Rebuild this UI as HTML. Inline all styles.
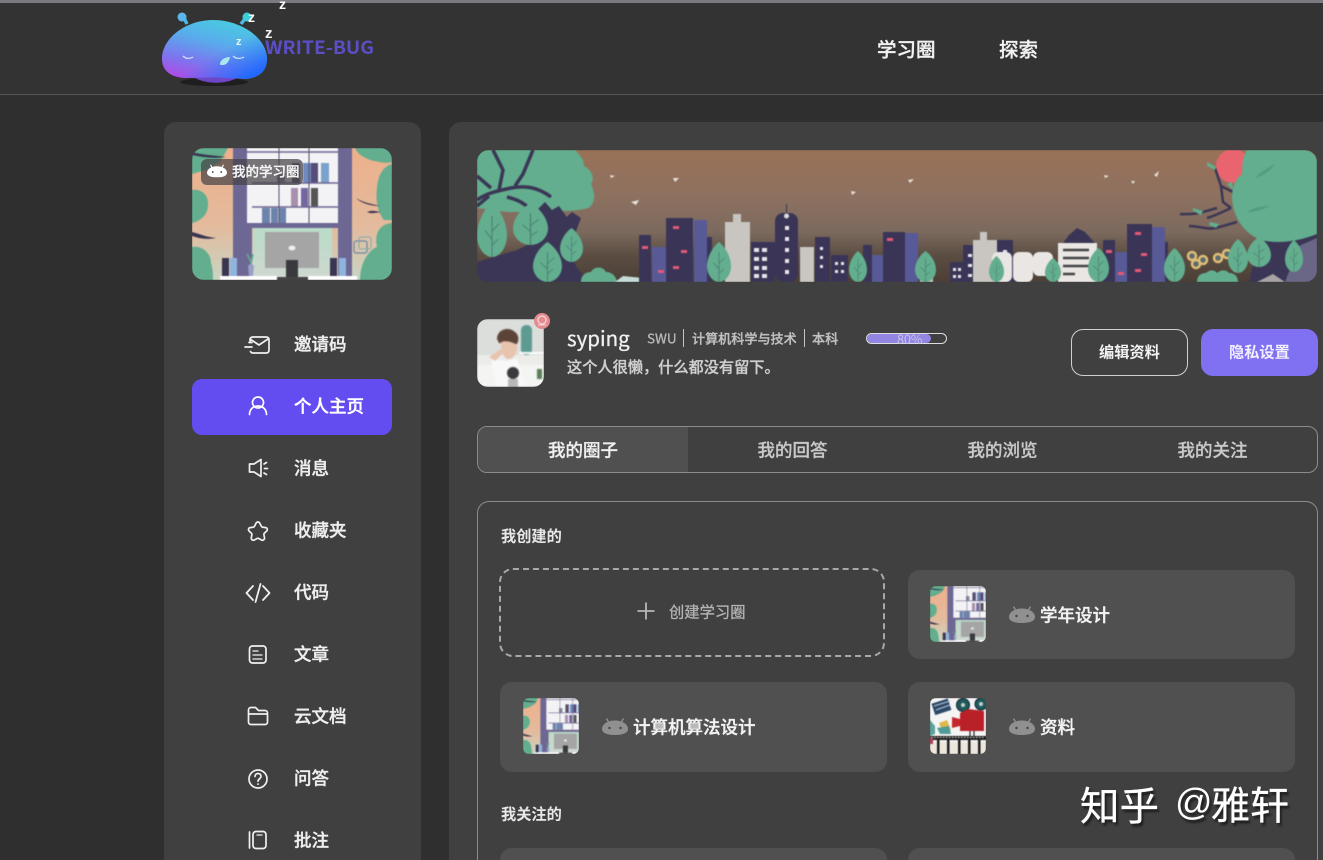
<!DOCTYPE html>
<html lang="zh">
<head>
<meta charset="utf-8">
<title>WRITE-BUG</title>
<style>
html,body{margin:0;padding:0;width:1323px;height:860px;overflow:hidden;background:#2f2f2f}
body{position:relative;font-family:"Noto Sans CJK SC","Liberation Sans",sans-serif;color:#eee}
.a{position:absolute}
.t{position:absolute;white-space:nowrap;line-height:1;transform:translateY(-50%)}
.s{-webkit-text-stroke:.3px currentColor}
.m{font-size:17.5px;font-weight:500;left:294px;color:#eee;-webkit-text-stroke:.35px currentColor;margin-top:-1px}
.card{position:absolute;width:387px;height:90px;background:#505050;border-radius:12px}
.thumb{position:absolute;width:56px;height:56px;border-radius:6px;overflow:hidden}
.thumb svg{filter:blur(.4px)}
.ct{font-size:17.5px;font-weight:500;color:#f2f2f2;-webkit-text-stroke:.35px currentColor}
.tab{font-size:17.5px;font-weight:500;color:#c8c8c8;-webkit-text-stroke:.25px currentColor}
svg{display:block}
</style>
</head>
<body>
<svg width="0" height="0" style="position:absolute">
<defs>
<symbol id="robot" viewBox="0 0 26 18">
<path d="M6.500 5L4.500 1.500M19.500 5l2-3.500" stroke="currentColor" stroke-width="1.400" fill="none"/>
<path d="M0 12C0 7 6 3.500 13 3.500S26 7 26 12c0 4-5 6-13 6S0 16 0 12z" fill="currentColor"/>
<circle cx="7.500" cy="11" r="1.200" fill="#444"/><circle cx="18.500" cy="11" r="1.200" fill="#444"/>
</symbol>
<linearGradient id="hsk" x1="0" y1="0" x2="0" y2="1"><stop offset="0" stop-color="#eeb08c"/><stop offset=".6" stop-color="#e3bb9d"/><stop offset="1" stop-color="#c9d5c4"/></linearGradient>
<linearGradient id="hgr" x1="0" y1="0" x2="0" y2="1"><stop offset="0" stop-color="#b9dcc8"/><stop offset="1" stop-color="#cfd8d0"/></linearGradient>
<symbol id="hero" viewBox="0 0 200 132" preserveAspectRatio="xMinYMid slice">
<rect width="200" height="132" fill="url(#hsk)"/>
<path d="M0 0H36L28 14 14 22 0 26z" fill="#62ae8e"/>
<path d="M0 42c10-2 17 6 16 16-1 10-8 15-16 17z" fill="#62ae8e"/>
<path d="M0 99c10-2 19 6 19 16 2 6 2 12 2 17H0z" fill="#62ae8e"/>
<path d="M0 84c8 2 14 5 24 6-10 2-18 0-24-2z" fill="#3a3550"/>
<path d="M0 4c10 3 20 3 34 5-12 2-24 0-34-2z" fill="#3a3550"/>
<path d="M163 0h37v14c-6 2-12 0-18-1-8-2-16-6-19-13z" fill="#62ae8e"/>
<path d="M200 16c-8 2-14 10-15 24-2 14 2 26 7 32h8z" fill="#62ae8e"/>
<path d="M200 75c-12 1-18 10-15 24-10 4-17 18-17 33h32z" fill="#62ae8e"/>
<path d="M164 50c8 5 16 6 24 8-8 0-18-2-24-8zM175 64c5-2 8-1 14 0-6 1-10 2-14 0z" fill="#3a3550"/>
<rect x="162" y="93" width="13" height="12" rx="2" fill="none" stroke="#6d88a8" stroke-width="1.200"/><rect x="167" y="89" width="12" height="12" rx="2" fill="none" stroke="#8aa"/>
<rect x="41" y="0" width="19" height="132" fill="#6d6794"/><rect x="146" y="0" width="14" height="132" fill="#6d6794"/>
<rect x="55" y="0" width="91" height="75" fill="#f3f2f5"/>
<rect x="70" y="60" width="8" height="15" fill="#6c83ac"/><rect x="79" y="60" width="7" height="15" fill="#6c83ac"/><rect x="87" y="60" width="7" height="15" fill="#6c83ac"/>
<rect x="99" y="40" width="7" height="19" fill="#a890ad"/><rect x="109" y="40" width="7" height="19" fill="#74679f"/><rect x="119" y="40" width="7" height="19" fill="#555"/>
<rect x="85" y="24" width="8" height="11" fill="#8a8aa0"/><rect x="100" y="15" width="8" height="20" fill="#55506e"/><rect x="111" y="15" width="8" height="20" fill="#6e8ac0"/><rect x="119" y="15" width="7" height="20" fill="#584c78"/><rect x="129" y="15" width="8" height="20" fill="#7ba2cc"/>
<path d="M55 4H146M60 35H146M60 59H146" stroke="#6d6794" stroke-width="1.500"/>
<path d="M87 0V75M117 0V75" stroke="#55506e" stroke-width="1"/>
<rect x="55" y="75" width="91" height="5" fill="#6d6794"/>
<rect x="61" y="80" width="79" height="50" fill="url(#hgr)"/>
<rect x="73" y="84" width="54" height="36" fill="#a5a5a5"/>
<rect x="94" y="112" width="12" height="17" fill="#3a3a3e"/><rect x="85" y="129" width="31" height="3" fill="#444"/>
<ellipse cx="100" cy="100" rx="3.500" ry="2.500" fill="#eee"/>
<rect x="30" y="110" width="7" height="19" fill="#3a3550"/><rect x="38" y="110" width="7" height="19" fill="#8fb4dd"/>
<rect x="138" y="110" width="7" height="19" fill="#3a3550"/><rect x="147" y="110" width="7" height="19" fill="#8fb4dd"/>
<path d="M57 128l-1-10 3-3 3 3-1 10z" fill="#98a0c8"/><path d="M59 116l2-10M59 114l-4-8" stroke="#62ae8e" stroke-width="1.500"/>
<rect x="28" y="128" width="57" height="4" fill="#fff"/><rect x="116" y="128" width="49" height="4" fill="#fff"/>
</symbol>
<symbol id="leaf" viewBox="0 0 30 56" preserveAspectRatio="none">
<path d="M15 0C24 8 30 22 30 34c0 12-7 22-15 22S0 46 0 34C0 22 6 8 15 0z" fill="#62ae8e"/>
<path d="M15 14V56M15 30l7-8M15 38l-7-9M15 44l6-6" stroke="#4b7f72" stroke-width="1" fill="none"/>
</symbol>
<linearGradient id="sky" x1="0" y1="0" x2="0" y2="1"><stop offset="0" stop-color="#9a7158"/><stop offset=".35" stop-color="#8d7160"/><stop offset=".62" stop-color="#7c6a5e"/><stop offset=".8" stop-color="#5b4d42"/><stop offset="1" stop-color="#4b3f36"/></linearGradient>
<linearGradient id="blob" x1=".2" y1="1" x2=".65" y2="0"><stop offset="0" stop-color="#b04ae6"/><stop offset=".3" stop-color="#7a78ee"/><stop offset=".62" stop-color="#5aaaec"/><stop offset="1" stop-color="#48cce0"/></linearGradient>
<linearGradient id="blob2" x1="0" y1="0" x2="1" y2="1"><stop offset=".55" stop-color="#2f74f6" stop-opacity="0"/><stop offset=".9" stop-color="#1f68ff"/></linearGradient>
</defs>
</svg>

<!-- header -->
<div class="a" style="left:0;top:0;width:1323px;height:94px;background:#333;border-bottom:1px solid #565656"></div>
<div class="a" style="left:0;top:0;width:1323px;height:3px;background:#7a7a80"></div>
<svg class="a" style="left:150px;top:0;filter:blur(.3px)" width="240" height="94" viewBox="150 0 240 94">
<ellipse cx="214" cy="82" rx="34" ry="4" fill="#1e1e1e"/>
<path d="M192 76c12 9 36 9 48 0z" fill="#6d47c8"/>
<path d="M187 24l-4-8M241 24l6-8" stroke="#4cb8e8" stroke-width="3.500"/>
<circle cx="182" cy="17" r="4.500" fill="#5cb6ec"/><circle cx="247" cy="17" r="4.500" fill="#3bcfd8"/>
<path d="M162 59C162 38 186 20 213 20c28 0 54 18 54 39 0 12-8 19-22 20-8-.5-20-1.500-33-1.500-12 0-22 .5-28 .5-13-1-22-7-22-19z" fill="url(#blob)"/>
<path d="M162 59C162 38 186 20 213 20c28 0 54 18 54 39 0 12-8 19-22 20-8-.5-20-1.500-33-1.500-12 0-22 .5-28 .5-13-1-22-7-22-19z" fill="url(#blob2)"/>
<path d="M183 56c3 3 7 3 10 1M233 56c3 3 8 3 11 1" stroke="#cfe0f8" stroke-width="1.300" fill="none"/>
<path d="M220 64c0-4 5-7 10-7-1 5-4 8-7 8-2 0-3 0-3-1z" fill="#a8e8ee"/>
<text x="236" y="45" font-family="Liberation Sans" font-weight="700" font-size="11" fill="#e8f4f8">z</text>
<text x="248" y="22" font-family="Liberation Sans" font-weight="700" font-size="14" fill="#fff">z</text>
<text x="265" y="38" font-family="Liberation Sans" font-weight="700" font-size="15" fill="#eee">z</text>
<text x="279" y="9" font-family="Liberation Sans" font-weight="700" font-size="14" fill="#fff">z</text>
<text x="265" y="54" font-family="Noto Sans CJK SC,Liberation Sans,sans-serif" font-weight="700" font-size="18" textLength="109" lengthAdjust="spacingAndGlyphs" fill="#5b4fc6">WRITE-BUG</text>
</svg>
<div class="t s" style="left:877px;top:47.500px;font-size:19.500px;font-weight:500;color:#f2f2f2">学习圈</div>
<div class="t s" style="left:999px;top:47.500px;font-size:19.500px;font-weight:500;color:#f2f2f2">探索</div>

<!-- sidebar -->
<div class="a" style="left:164px;top:122px;width:257px;height:738px;background:#404040;border-radius:12px 12px 0 0"></div>
<div class="a" style="left:192px;top:148px;width:200px;height:132px;border-radius:12px;overflow:hidden"><svg style="filter:blur(.5px)" width="200" height="132" viewBox="0 0 200 132"><use href="#hero" width="200" height="132"/></svg></div>
<div class="a" style="left:201px;top:159px;width:102px;height:26px;background:rgba(70,66,70,.72);border-radius:6px"></div>
<svg class="a" style="left:207px;top:163px;color:#fff" width="20" height="15" viewBox="0 0 26 18"><use href="#robot" width="26" height="18"/></svg>
<div class="t s" style="left:232px;top:171px;font-size:13.500px;font-weight:500;color:#f4f4f4">我的学习圈</div>

<div class="a" style="left:192px;top:379px;width:200px;height:56px;background:#634cf0;border-radius:10px"></div>
<div class="t m" style="top:344.500px">邀请码</div>
<div class="t m" style="top:406.500px;color:#fff">个人主页</div>
<div class="t m" style="top:468.500px">消息</div>
<div class="t m" style="top:530.500px">收藏夹</div>
<div class="t m" style="top:592.500px">代码</div>
<div class="t m" style="top:654.500px">文章</div>
<div class="t m" style="top:716.500px">云文档</div>
<div class="t m" style="top:778.500px">问答</div>
<div class="t m" style="top:840.500px">批注</div>

<!-- main panel -->
<div class="a" style="left:449px;top:122px;width:874px;height:738px;background:#404040;border-radius:12px 0 0 0"></div>

<!-- banner -->
<div class="a" style="left:477px;top:150px;width:840px;height:132px;border-radius:12px;overflow:hidden">
<svg style="filter:blur(.5px)" width="840" height="132" viewBox="0 0 840 132">
<rect width="840" height="132" fill="url(#sky)"/>
<circle cx="756" cy="16" r="17" fill="#e9646f"/>
<!-- left big tree -->
<path d="M0 0H98c6 6 9 10 9 16 8 4 11 12 7 18 5 10 4 20-3 24-14 4-24 2-32 4H30L0 58z" fill="#62ae8e"/>
<path d="M56 0L46 24 38 36M16 0L26 20 22 40M0 26L14 38M0 50C10 43 20 41 34 38 50 35 62 38 74 47M30 47c8 2 14 4 22 11M12 46L0 56" stroke="#3b3656" stroke-width="3.500" fill="none"/>
<path d="M0 132V112L40 100 70 85 95 62 104 68 92 100 100 118 112 132z" fill="#3b3656"/>
<path d="M60 60L68 52 75 60 82 56 92 70 86 92 70 92z" fill="#3b3656"/>
<use href="#leaf" x="0" y="52" width="30" height="55"/>
<use href="#leaf" x="36" y="53" width="35" height="42"/>
<use href="#leaf" x="56" y="92" width="29" height="40"/>
<use href="#leaf" x="83" y="78" width="23" height="34"/>
<path d="M104 132c0-8 6-10 10-10 3-6 12-6 15 0 6 0 10 4 11 10z" fill="#62ae8e"/>
<path d="M138 132l8-6 20 2-4 4z" fill="#c7dcd8"/>
<!-- skyline left -->
<g fill="#3a3556">
<rect x="162" y="85" width="12" height="47"/><rect x="189" y="68" width="27" height="64"/><rect x="225" y="87" width="10" height="45"/>
<rect x="274" y="92" width="24" height="40"/><rect x="298" y="63" width="23" height="69" rx="8"/><rect x="338" y="87" width="15" height="45"/>
<rect x="354" y="105" width="17" height="27"/><rect x="386" y="95" width="9" height="37"/><rect x="406" y="82" width="22" height="50"/>
<rect x="473" y="112" width="13" height="20"/><rect x="486" y="95" width="14" height="37"/><rect x="520" y="90" width="16" height="42"/>
<rect x="536" y="107" width="15" height="25"/><rect x="626" y="90" width="12" height="42"/><rect x="650" y="74" width="25" height="58"/><rect x="685" y="92" width="6" height="40"/>
</g>
<g fill="#575a96">
<rect x="175" y="97" width="14" height="35"/><rect x="217" y="70" width="13" height="62"/><rect x="395" y="105" width="11" height="27"/>
<rect x="428" y="83" width="13" height="49"/><rect x="638" y="102" width="12" height="30"/><rect x="675" y="77" width="13" height="55"/>
</g>
<g fill="#c9c6c2">
<path d="M248 72h8v-8h8v8h9v60h-25z"/><rect x="323" y="97" width="14" height="35"/><path d="M496 90h7v-8h7v8h10v42h-24z"/>
<rect x="443" y="112" width="13" height="20"/>
</g>
<rect x="309" y="54" width="1" height="9" fill="#3a3556"/><circle cx="309.500" cy="66" r="2.500" fill="#ddd"/>
<g fill="#e9e6e4">
<rect x="515" y="102" width="20" height="30" rx="6"/><rect x="536" y="102" width="20" height="30" rx="6"/><rect x="556" y="102" width="20" height="24" rx="6"/>
<rect x="581" y="93" width="39" height="39"/>
</g>
<path d="M586 93l6-8 8-7 8 4 10 11z" fill="#3a3556"/>
<path d="M586 100h26M586 108h26M586 116h26M586 124h12" stroke="#444" stroke-width="2.500"/>
<g fill="#e8e5ea">
<rect x="277" y="98" width="5" height="4"/><rect x="285" y="98" width="5" height="4"/><rect x="277" y="107" width="5" height="4"/><rect x="285" y="107" width="5" height="4"/><rect x="277" y="116" width="5" height="4"/><rect x="285" y="116" width="5" height="4"/><rect x="277" y="124" width="5" height="4"/><rect x="285" y="124" width="5" height="4"/>
<rect x="308" y="76" width="4" height="4"/><rect x="308" y="87" width="4" height="4"/><rect x="308" y="98" width="4" height="4"/><rect x="308" y="109" width="4" height="4"/><rect x="308" y="120" width="4" height="4"/>
<rect x="343" y="97" width="3" height="3"/><rect x="343" y="106" width="3" height="3"/><rect x="343" y="115" width="3" height="3"/><rect x="358" y="112" width="3" height="3"/><rect x="364" y="112" width="3" height="3"/><rect x="358" y="120" width="3" height="3"/><rect x="364" y="120" width="3" height="3"/>
<rect x="476" y="118" width="3" height="3"/><rect x="481" y="118" width="3" height="3"/><rect x="476" y="125" width="3" height="3"/><rect x="481" y="125" width="3" height="3"/><rect x="491" y="104" width="4" height="3"/><rect x="491" y="114" width="4" height="3"/><rect x="491" y="124" width="4" height="3"/><rect x="526" y="100" width="4" height="3"/><rect x="526" y="110" width="4" height="3"/><rect x="526" y="120" width="4" height="3"/><rect x="540" y="114" width="3" height="3"/><rect x="545" y="114" width="3" height="3"/><rect x="540" y="123" width="3" height="3"/><rect x="545" y="123" width="3" height="3"/>
</g>
<g fill="#e25a78">
<rect x="196" y="76" width="6" height="3"/><rect x="165" y="96" width="6" height="3"/><rect x="204" y="100" width="6" height="3"/><rect x="196" y="116" width="6" height="3"/><rect x="181" y="120" width="6" height="3"/><rect x="410" y="88" width="6" height="3"/><rect x="658" y="82" width="6" height="3"/><rect x="664" y="103" width="6" height="3"/><rect x="658" y="119" width="6" height="3"/><rect x="629" y="100" width="6" height="3"/><rect x="641" y="122" width="6" height="3"/>
</g>
<use href="#leaf" x="230" y="92" width="24" height="40"/>
<use href="#leaf" x="372" y="101" width="18" height="31"/>
<use href="#leaf" x="438" y="101" width="21" height="31"/>
<use href="#leaf" x="512" y="106" width="15" height="26"/>
<use href="#leaf" x="568" y="108" width="16" height="24"/>
<use href="#leaf" x="611" y="98" width="21" height="34"/>
<use href="#leaf" x="687" y="98" width="21" height="34"/>
<!-- sunflowers -->
<g fill="#5d6a70" stroke="#e0bd74" stroke-width="2.500">
<circle cx="715" cy="106" r="4"/><circle cx="726" cy="110" r="4"/><circle cx="719" cy="114" r="4"/><circle cx="741" cy="108" r="4"/><circle cx="750" cy="104" r="4"/>
</g>
<path d="M720 132c0-7 5-9 9-9 4-4 9-3 11 0 4-4 10-3 12 0 6 0 9 4 9 9z" fill="#62ae8e"/>
<use href="#leaf" x="751" y="89" width="20" height="34"/>
<!-- right tree -->
<path d="M772 132l10-44h42l16-4v48z" fill="#3b3656"/>
<path d="M808 132l14-36 18-8v44z" fill="#6a6786"/>
<path d="M780 132l16-8 12 8z" fill="#a8a4a6"/>
<path d="M738 18l6 18 2 16 8 6M744 36l12 6M740 58C726 62 718 65 703 64M754 58C745 62 738 66 730 68M760 72C748 75 738 80 728 78 722 77 716 76 712 76" stroke="#3b3656" stroke-width="2.500" fill="none"/>
<path d="M730 12l9 5-1 3-8-4zM716 58l10 3-2 4-8-4zM733 72l9 2-3 4-7-3zM750 34l5-2 1 8z" fill="#62ae8e"/>
<path d="M770 0h58c8 2 12 6 12 12v72c-20 8-40 10-56 6-16-6-28-22-29-42 0-12 4-20 10-24 0-10 1-18 5-24z" fill="#62ae8e"/>
<path d="M778 28c6-6 12-10 20-14-4 6-12 12-20 14zM770 62c6-4 14-6 22-6-6 4-14 6-22 6z" fill="#549c80"/>
<use href="#leaf" x="770" y="87" width="24" height="30"/>
<use href="#leaf" x="808" y="90" width="18" height="32"/>
<!-- birds -->
<g fill="#e8e2da">
<path d="M133 25l5 1-4 2zM196 28l6 0-4 4zM154 52l8-2-3 5zM374 41l5 1-4 3zM431 30l6-1-4 4zM627 25l5 1-4 2zM677 25l5-4-2 6zM654 31h4l-2 3z"/>
</g>
</svg></div>

<!-- profile -->
<div class="a" style="left:477px;top:319px;width:67px;height:68px;border-radius:11px;overflow:hidden">
<svg style="filter:blur(.7px)" width="67" height="68" viewBox="0 0 67 68">
<rect width="67" height="68" fill="#ecece9"/>
<rect x="0" y="0" width="67" height="36" fill="#dcdedb"/>
<rect x="44" y="6" width="11" height="30" rx="5" fill="#5d9a90"/>
<rect x="42" y="33" width="25" height="2" fill="#fff"/>
<path d="M0 46h67v22H0z" fill="#f4f4f2"/>
<path d="M20 20c0-8 8-12 15-9 6 3 8 8 5 14l-18-1z" fill="#5b4338"/>
<path d="M24 23c5-2 12 0 16 3 0 8-3 14-9 14-5-1-7-10-7-17z" fill="#e8c3ad"/>
<path d="M14 40l14 2 12-2 10 28H20z" fill="#f8f8f8"/>
<path d="M12 38l12-8 2 4-8 8z" fill="#e8c3ad"/>
<circle cx="36" cy="54" r="6" fill="#3a3a3e"/><rect x="31" y="60" width="10" height="8" fill="#b8b8b8"/>
<rect x="60" y="50" width="5" height="10" fill="#5a7d55"/>
</svg></div>
<svg class="a" style="left:533px;top:312px" width="18" height="18" viewBox="0 0 18 18"><circle cx="9" cy="9" r="8" fill="#e58a8f"/><circle cx="9" cy="8" r="4" fill="none" stroke="#f6d7d5" stroke-width="1.300"/><path d="M5 13h8" stroke="#f6d7d5"/></svg>
<div class="t s" style="left:567px;top:337px;font-size:20.500px;color:#f0f0f0">syping</div>
<div class="t s" style="left:647px;top:338px;font-size:13.500px;color:#b8b8b8">SWU</div>
<div class="a" style="left:683px;top:329px;width:1px;height:18px;background:#c4c4c4"></div>
<div class="t s" style="left:692px;top:338px;font-size:13.100px;font-weight:500;color:#c0c0c0">计算机科学与技术</div>
<div class="a" style="left:804px;top:329px;width:1px;height:18px;background:#c4c4c4"></div>
<div class="t s" style="left:812px;top:338px;font-size:13.100px;font-weight:500;color:#c0c0c0">本科</div>
<div class="a" style="left:866px;top:333px;width:79px;height:9px;border:1px solid #ddd;border-radius:6px;overflow:hidden"><div style="width:64px;height:9px;background:#9385e2;border-radius:6px"></div></div>
<div class="t" style="left:897px;top:339px;font-size:12.500px;color:#c9c4ee">80%</div>
<div class="t s" style="left:567px;top:367px;font-size:15.200px;font-weight:500;color:#cfcfcf">这个人很懒，什么都没有留下。</div>

<div class="a" style="left:1071px;top:329px;width:115px;height:45px;border:1px solid #d0d0d0;border-radius:12px"></div>
<div class="t" style="left:1099px;top:352px;font-size:15.200px;font-weight:700;color:#f2f2f2">编辑资料</div>
<div class="a" style="left:1201px;top:329px;width:117px;height:47px;background:#8070f2;border-radius:12px"></div>
<div class="t" style="left:1229px;top:352px;font-size:15.200px;font-weight:700;color:#f2f0ff">隐私设置</div>

<!-- tabs -->
<div class="a" style="left:477px;top:426px;width:839px;height:45px;border:1px solid #8c8c8c;border-radius:10px;overflow:hidden"><div style="width:210px;height:45px;background:#505050"></div></div>
<div class="t tab" style="left:548px;top:449.500px;color:#f0f0f0">我的圈子</div>
<div class="t tab" style="left:757.500px;top:449.500px">我的回答</div>
<div class="t tab" style="left:967.500px;top:449.500px">我的浏览</div>
<div class="t tab" style="left:1177.500px;top:449.500px">我的关注</div>

<!-- content box -->
<div class="a" style="left:477px;top:501px;width:839px;height:359px;border:1px solid #8c8c8c;border-bottom:0;border-radius:12px 12px 0 0"></div>
<div class="t" style="left:501px;top:536px;font-size:15.200px;font-weight:700;color:#e8e8e8">我创建的</div>
<div class="a" style="left:499px;top:568px;width:382px;height:85px;border:2px dashed #a8a8a8;border-radius:14px"></div>
<svg class="a" style="left:636px;top:601px" width="20" height="20" viewBox="0 0 20 20"><path d="M10 1.500V18.500M1.500 10H18.500" stroke="#b8b8b8" stroke-width="1.800"/></svg>
<div class="t s" style="left:669px;top:612px;font-size:15.300px;color:#b4b4b4">创建学习圈</div>

<div class="card" style="left:908px;top:570px;height:89px"></div>
<div class="card" style="left:500px;top:682px"></div>
<div class="card" style="left:908px;top:682px"></div>
<div class="card" style="left:500px;top:848px;height:12px;border-radius:12px 12px 0 0"></div>
<div class="card" style="left:908px;top:848px;height:12px;border-radius:12px 12px 0 0"></div>

<div class="thumb" style="left:930px;top:586px"><svg width="56" height="56" viewBox="0 0 132 132"><use href="#hero" width="200" height="132"/></svg></div>
<div class="thumb" style="left:523px;top:698px"><svg width="56" height="56" viewBox="0 0 132 132"><use href="#hero" width="200" height="132"/></svg></div>
<div class="thumb" style="left:930px;top:698px"><svg width="56" height="56" viewBox="0 0 56 56">
<rect width="56" height="56" fill="#f4f4f4"/>
<rect x="3" y="3" width="17" height="12" fill="#2c4968" transform="rotate(-18 11 9)"/>
<path d="M4 8l16-5M6 12l14-5" stroke="#b8c8d8"/>
<circle cx="33" cy="7" r="6.500" fill="#1e5a5a" stroke="#123"/><circle cx="33" cy="7" r="2" fill="#ccc"/>
<circle cx="51" cy="6" r="6" fill="#1e5a5a" stroke="#123"/><circle cx="51" cy="6" r="2" fill="#ccc"/>
<path d="M30 15l8-4 16 2v20H30z" fill="#b92027"/>
<path d="M22 19l8 2v7l-8 2z" fill="#c6272d"/>
<path d="M9 25l8-3 4 10-8 3z" fill="#e0b84a"/><path d="M7 30l12-2 2 8H10z" fill="#4f9c9a"/>
<path d="M40 33v6M44 33v6" stroke="#222" stroke-width="1.200"/>
<rect x="0" y="38" width="56" height="4" fill="#1d1d1d"/>
<path d="M1 39.500h54" stroke="#eee" stroke-dasharray="1.500 1.500"/>
<rect x="0" y="44" width="56" height="12" fill="#ece6dc"/>
<g fill="#1d1d1d"><rect x="7" y="42" width="2.500" height="14"/><rect x="17" y="42" width="2.500" height="14"/><rect x="28" y="42" width="2.500" height="14"/><rect x="38" y="42" width="2.500" height="14"/><rect x="48" y="42" width="2.500" height="14"/></g>
<path d="M0 22l5 6v8l-5 2z" fill="#5aa39a"/><rect x="0" y="40" width="3" height="6" fill="#b23a55"/>
</svg></div>

<svg class="a" style="left:1009px;top:605px;color:#909090" width="26" height="18"><use href="#robot" width="26" height="18"/></svg>
<svg class="a" style="left:602px;top:717px;color:#909090" width="26" height="18"><use href="#robot" width="26" height="18"/></svg>
<svg class="a" style="left:1009px;top:717px;color:#909090" width="26" height="18"><use href="#robot" width="26" height="18"/></svg>
<div class="t ct" style="left:1040px;top:615px">学年设计</div>
<div class="t ct" style="left:633px;top:727px">计算机算法设计</div>
<div class="t ct" style="left:1040px;top:727px">资料</div>

<div class="t" style="left:501px;top:814px;font-size:15.200px;font-weight:700;color:#e8e8e8">我关注的</div>

<!-- sidebar icons -->
<svg class="a" style="left:0;top:0" width="1323" height="860" viewBox="0 0 1323 860" fill="none" stroke="#f0f0f0" stroke-width="1.700" stroke-linecap="round" stroke-linejoin="round">
<path d="M250 342v-2c0-2 1-3 3-3h13c2 0 3 1 3 3v10c0 2-1 3-3 3h-13c-1 0-2-.500-2.500-1.500M250 339l9 6 9-6M245 347h7M249 342.500h3"/>
<path d="M258 397a5.500 5.500 0 1 0 .01 0zM249.500 414.500c0-5 3.500-8.500 8.500-8.500s8.500 3.500 8.500 8.500" stroke="#fff"/>
<path d="M249.500 464h4.500l7-4.500v17l-7-4.500h-4.500zM264 464l2.500-1.500M264.500 468.500h3M264 473l2.500 1.500"/>
<path d="M258 522c.8 0 1.400.500 1.800 1.300l1.500 3c.2.400.6.700 1 .8l3.300.500c1.700.3 2.300 2.200 1.100 3.400l-2.400 2.300c-.3.300-.5.800-.4 1.200l.6 3.300c.3 1.700-1.500 3-3 2.200l-3-1.600c-.4-.2-.8-.2-1.200 0l-3 1.600c-1.500.8-3.300-.5-3-2.200l.6-3.300c.1-.4-.1-.9-.4-1.200l-2.400-2.300c-1.200-1.200-.6-3.100 1.100-3.400l3.300-.5c.4-.1.8-.4 1-.8l1.500-3c.4-.8 1-1.300 1.800-1.300z"/>
<path d="M253 586l-6.500 7 6.500 7M263 586l6.500 7-6.500 7M260.500 584l-5 18" stroke-width="1.800"/>
<rect x="249.500" y="646" width="16.500" height="17" rx="3"/><path d="M253 651h5M253 655h9M253 659h9" stroke-width="1.300"/>
<path d="M248.500 710c0-1.500 1-2.500 2.500-2.500h4.500l3 3h6.500c1.500 0 2.500 1 2.500 2.500v9c0 1.500-1 2.500-2.500 2.500h-14c-1.500 0-2.500-1-2.500-2.500zM248.500 714h18.500"/>
<circle cx="258" cy="779" r="9"/><path d="M255 776.500c0-1.800 1.300-3 3-3s3 1.200 3 2.800c0 2.500-3 2.500-3 5M258 784v.300"/>
<path d="M249.500 832v16"/><rect x="253" y="831.500" width="13" height="17" rx="3"/><path d="M257 835h5" stroke-width="1.300"/>
</svg>

<!-- watermark -->
<div class="t" style="left:1080px;top:804px;font-size:39.500px;font-weight:400;color:#fff;text-shadow:2px 3px 2px #1c1c1c;-webkit-text-stroke:.3px #fff">知乎</div>
<div class="t" style="left:1175px;top:802px;font-family:'Liberation Sans',sans-serif;font-size:37px;color:#fff;text-shadow:2px 3px 2px #1c1c1c">@</div>
<div class="t" style="left:1211px;top:804px;font-size:39px;font-weight:400;color:#fff;text-shadow:2px 3px 2px #1c1c1c;-webkit-text-stroke:.3px #fff">雅轩</div>
</body>
</html>
